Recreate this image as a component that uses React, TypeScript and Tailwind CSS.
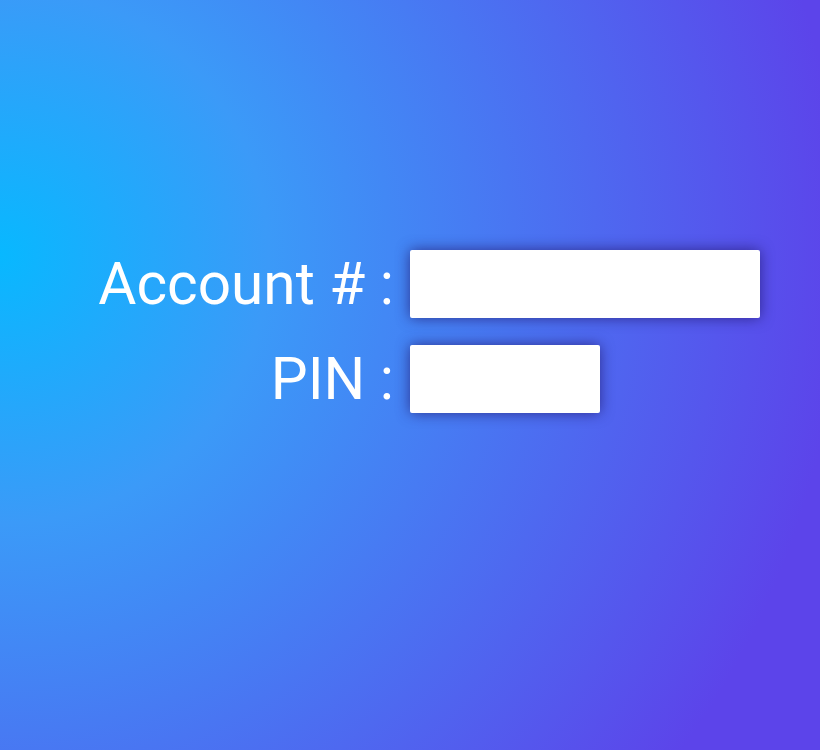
export default function App() {
  return (
    <div
      className="w-[820px] h-[750px] overflow-hidden bg-[radial-gradient(circle_at_0%_34%,#08b8ff_0%,#3b9af8_28%,#5c44ea_88%,#5c44ea_100%)]"
      style={{ fontFamily: 'Roboto, "Liberation Sans", sans-serif' }}
    >
      <div className="pt-[250px] pl-[94px] grid grid-cols-[300px_auto] gap-x-[16px] gap-y-[27px] items-center w-max">
        <label className="text-right text-white text-[58.5px] leading-none">Account # :</label>
        <input
          type="text"
          className="w-[350px] h-[68px] bg-white rounded-[2px] shadow-[0_0_14px_rgba(35,25,110,0.75)] outline-none"
        />
        <label className="text-right text-white text-[58.5px] leading-none">PIN :</label>
        <input
          type="password"
          className="w-[190px] h-[68px] bg-white rounded-[2px] shadow-[0_0_14px_rgba(35,25,110,0.75)] outline-none"
        />
      </div>
    </div>
  );
}
